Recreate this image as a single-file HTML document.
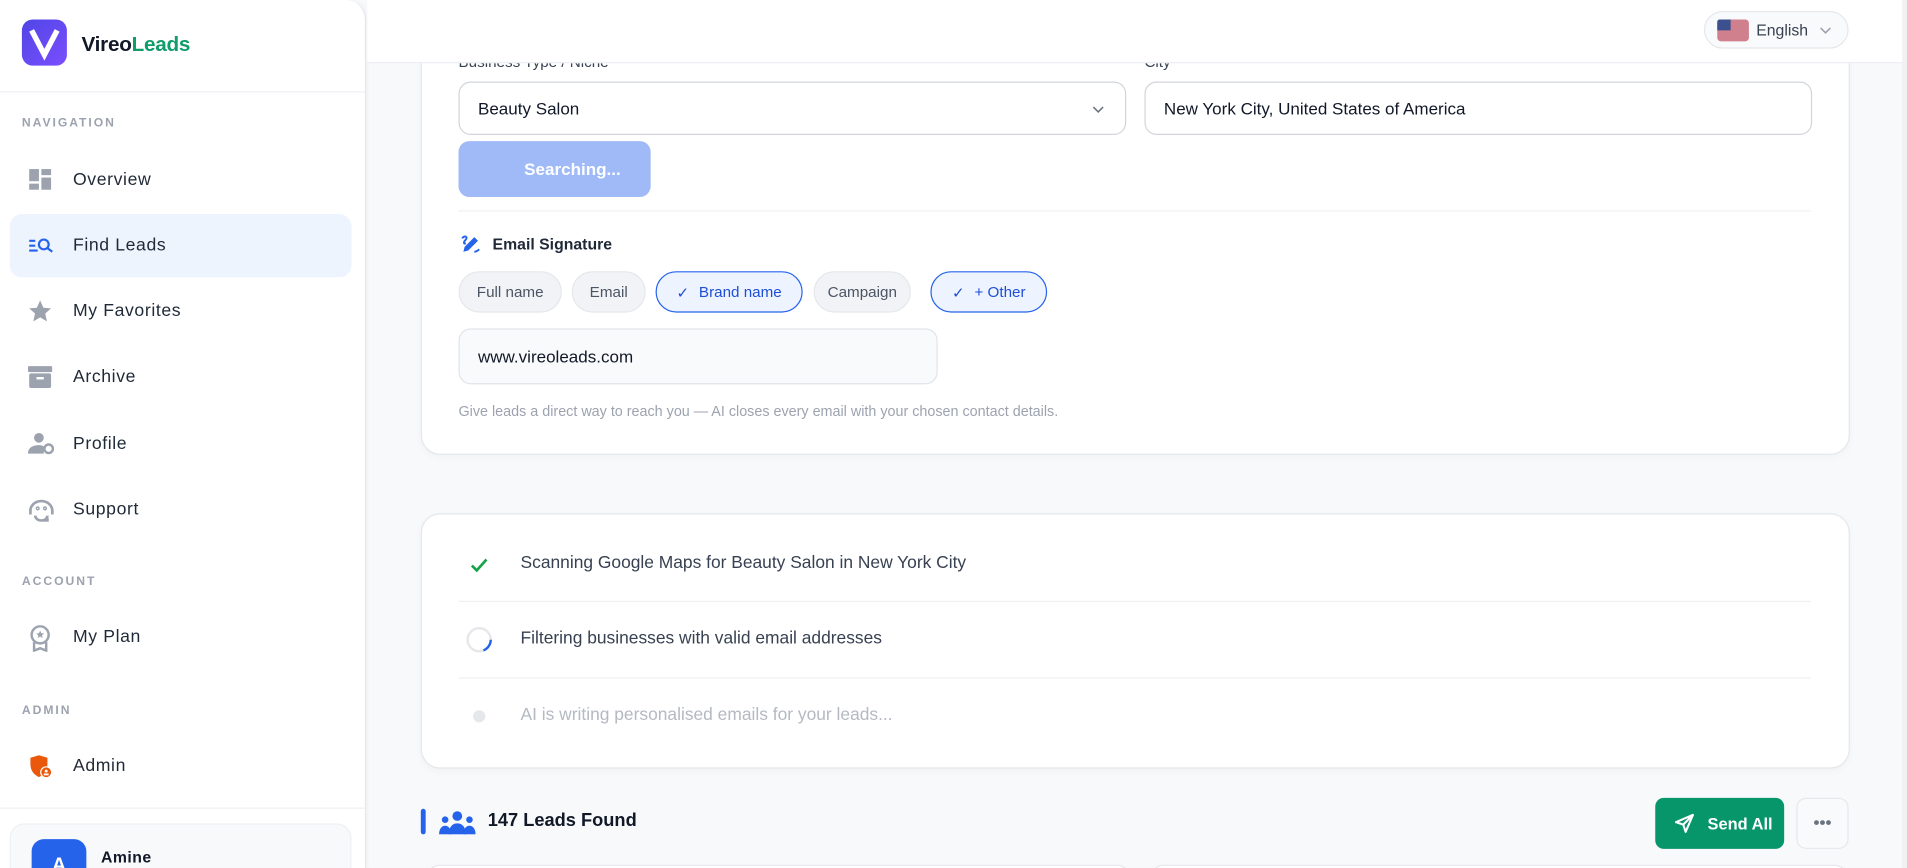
<!DOCTYPE html>
<html><head><meta charset="utf-8"><style>
*{box-sizing:border-box;margin:0;padding:0}
html,body{width:1907px;height:868px;overflow:hidden;background:#f8f9fb}
#w{position:absolute;left:0;top:0;width:1568px;height:714px;overflow:hidden;transform:scale(1.21620);transform-origin:0 0;background:#f8f9fb;font-family:"Liberation Sans",sans-serif;color:#111827}
.abs{position:absolute}
.sb{left:0;top:0;width:301px;height:714px;background:#fff;border-right:1px solid #e5e7eb;border-top-right-radius:16px;box-shadow:1px 0 3px rgba(0,0,0,.04)}
.lbl{position:absolute;left:18px;font-size:10px;font-weight:bold;letter-spacing:1.6px;color:#9ca3af}
.nav{position:absolute;left:8px;width:281px;height:52px;border-radius:10px;display:flex;align-items:center;padding-left:52px;font-size:14.5px;color:#1f2937;letter-spacing:.5px}
.nav svg{position:absolute;left:15px;top:16px}
.hdr{left:302px;top:0;width:1262px;height:52px;background:#fff;border-bottom:1px solid #eceef2;z-index:5}
.card{background:#fff;border:1px solid #e5e7eb;border-radius:16px;box-shadow:0 2px 6px rgba(0,0,0,.03)}
.inp{position:absolute;height:44px;border:1px solid #d1d5db;border-radius:10px;font-size:14px;display:flex;align-items:center;padding-left:15px;color:#111827}
.chip{position:absolute;top:223px;height:34px;border-radius:17px;border:1px solid #e5e7eb;background:#f1f3f7;font-size:12.5px;color:#4b5563;display:flex;align-items:center;justify-content:center}
.chip.on{border:1px solid #2563eb;background:#eef4ff;color:#1d4ed8}
.row{position:absolute;left:428px;font-size:14.3px;color:#374151}
.sep{position:absolute;left:377px;width:1112px;height:1px;background:#eef0f3}
</style></head><body><div id="w">
<div class="abs sb">
  <div class="abs" style="left:18px;top:16px;width:37px;height:38px;border-radius:9px;background:linear-gradient(135deg,#4f46e5,#7c4dff)">
    <svg width="37" height="38" viewBox="0 0 37 38"><path d="M8 9 L18.5 29 L29 9" fill="none" stroke="#fff" stroke-width="4.5" stroke-linejoin="miter"/></svg>
  </div>
  <div class="abs" style="left:67px;top:27px;font-size:17px;font-weight:bold;letter-spacing:-.2px"><span style="color:#111827">Vireo</span><span style="color:#0f9d6b">Leads</span></div>
  <div class="abs" style="left:0;top:75px;width:300px;height:1px;background:#eef0f3"></div>
  <div class="lbl" style="top:96px">NAVIGATION</div>
  <div class="nav" style="top:122px"><svg width="20" height="20" viewBox="0 0 20 20" fill="#9ca3af"><rect x="1" y="1" width="8" height="10"/><rect x="11" y="1" width="8" height="5"/><rect x="1" y="13" width="8" height="5"/><rect x="11" y="8" width="8" height="10"/></svg>Overview</div>
  <div class="nav" style="top:176px;background:#eef4fe"><svg width="22" height="20" viewBox="0 0 22 20" fill="none" stroke="#2563eb" stroke-width="1.8"><path d="M1 6h5M1 10h5M1 14h7"/><circle cx="13" cy="9" r="4"/><path d="M16 12l4 3"/></svg>Find Leads</div>
  <div class="nav" style="top:230px"><svg width="20" height="20" viewBox="0 0 20 20"><path d="M10 1l2.7 6 6.3.6-4.8 4.2 1.4 6.4L10 15l-5.6 3.2 1.4-6.4L1 7.6l6.3-.6z" fill="#9ca3af"/></svg>My Favorites</div>
  <div class="nav" style="top:284px"><svg width="20" height="20" viewBox="0 0 20 20" fill="#9ca3af"><rect x="0" y="1" width="20" height="5" rx="1"/><rect x="1" y="7" width="18" height="12" rx="1.5"/><rect x="7" y="10" width="6" height="2" fill="#fff"/></svg>Archive</div>
  <div class="nav" style="top:339px"><svg width="22" height="20" viewBox="0 0 22 20" fill="#9ca3af"><circle cx="9" cy="5" r="4"/><path d="M0 18c0-5 4-7 9-7 2 0 3 .5 4 1v6z"/><circle cx="17" cy="14" r="3.5" fill="none" stroke="#9ca3af" stroke-width="2"/></svg>Profile</div>
  <div class="nav" style="top:393px"><svg width="22" height="20" viewBox="0 0 22 20" fill="none" stroke="#9ca3af" stroke-width="2.2"><path d="M2 14v-3a9 8 0 0118 0v3"/><path d="M6 15a5 4 0 0010 0"/><circle cx="8" cy="9" r=".6"/><circle cx="14" cy="9" r=".6"/><path d="M16 17v2h-4"/></svg>Support</div>
  <div class="lbl" style="top:473px">ACCOUNT</div>
  <div class="nav" style="top:498px"><svg width="20" height="22" viewBox="0 0 20 22" fill="none" stroke="#9ca3af" stroke-width="2"><circle cx="10" cy="8" r="7"/><path d="M10 4.5l1 2.2 2.3.2-1.8 1.5.6 2.3-2.1-1.3-2.1 1.3.6-2.3-1.8-1.5 2.3-.2z" fill="#9ca3af" stroke="none"/><path d="M5 14v7l5-2 5 2v-7"/></svg>My Plan</div>
  <div class="lbl" style="top:579px">ADMIN</div>
  <div class="nav" style="top:604px"><svg width="22" height="22" viewBox="0 0 22 22"><path d="M2 3l7-2 7 2v5c0 6-3 9-7 11-4-2-7-5-7-11z" fill="#ea580c"/><circle cx="15" cy="15" r="5" fill="#fff"/><circle cx="15" cy="15" r="4" fill="#ea580c"/><circle cx="15" cy="14" r="1.2" fill="#fff"/><rect x="13" y="16" width="4" height="1.5" fill="#fff"/></svg>Admin</div>
  <div class="abs" style="left:0;top:664px;width:300px;height:1px;background:#eef0f3"></div>
  <div class="abs" style="left:8px;top:677px;width:281px;height:50px;border-radius:12px;background:#f8f9fb;border:1px solid #eef0f3"></div>
  <div class="abs" style="left:26px;top:690px;width:45px;height:40px;border-radius:10px;background:#2563eb;color:#fff;font-weight:bold;text-align:center;line-height:44px">A</div>
  <div class="abs" style="left:83px;top:697px;font-size:13px;font-weight:bold;letter-spacing:.4px">Amine</div>
</div>

<div class="abs hdr">
  <div class="abs" style="left:1099px;top:9px;width:119px;height:31px;border:1px solid #e5e7eb;border-radius:16px;background:#f9fafb;display:flex;align-items:center;padding-left:10px;font-size:13px;color:#374151">
    <span style="display:inline-block;width:26px;height:18px;border-radius:3px;background:#d07f8c;position:relative;margin-right:6px"><span style="position:absolute;left:0;top:0;width:11px;height:9px;background:#3c4f8e;border-radius:2px 0 0 0"></span></span>English
    <svg style="margin-left:9px" width="10" height="6" viewBox="0 0 10 6"><path d="M1 1l4 4 4-4" fill="none" stroke="#9ca3af" stroke-width="1.3"/></svg>
  </div>
</div>
<div class="abs" style="left:1564px;top:0;width:4px;height:714px;background:#f1f1f1"></div>

<div class="abs card" style="left:346px;top:-20px;width:1175px;height:394px"></div>
<div class="abs" style="left:377px;top:44px;font-size:12.5px;color:#374151">Business Type / Niche</div>
<div class="abs" style="left:941px;top:44px;font-size:12.5px;color:#374151">City</div>
<div class="inp" style="left:377px;top:67px;width:549px">Beauty Salon<svg style="position:absolute;right:17px;top:19px" width="10" height="6" viewBox="0 0 10 6"><path d="M1 1l4 4 4-4" fill="none" stroke="#6b7280" stroke-width="1.3"/></svg></div>
<div class="inp" style="left:941px;top:67px;width:549px">New York City, United States of America</div>
<div class="abs" style="left:377px;top:116px;width:158px;height:46px;border-radius:9px;background:#9fbaf6;color:#fff;font-weight:bold;font-size:14px;line-height:46px;padding-left:54px">Searching...</div>
<div class="sep" style="top:173px"></div>
<svg class="abs" style="left:378px;top:192px" width="18" height="18" viewBox="0 0 18 18"><path d="M3 15l1-4 8-8 3 3-8 8z" fill="#2563eb"/><path d="M2 4c2-3 5-1 3 1s-2 4 0 3" fill="none" stroke="#2563eb" stroke-width="1.6"/><path d="M12 15c2 0 3-1 4-2" fill="none" stroke="#2563eb" stroke-width="1.6"/></svg>
<div class="abs" style="left:405px;top:193px;font-size:13px;font-weight:bold;color:#1f2937">Email Signature</div>
<div class="chip" style="left:377px;width:85px">Full name</div>
<div class="chip" style="left:470px;width:61px">Email</div>
<div class="chip on" style="left:539px;width:121px"><span style="margin-right:8px">✓</span>Brand name</div>
<div class="chip" style="left:669px;width:80px">Campaign</div>
<div class="chip on" style="left:765px;width:96px"><span style="margin-right:8px">✓</span>+ Other</div>
<div class="inp" style="left:377px;top:270px;width:394px;height:46px;background:#f9fafb;border-color:#e1e4ea">www.vireoleads.com</div>
<div class="abs" style="left:377px;top:331px;font-size:11.8px;color:#9ca3af">Give leads a direct way to reach you — AI closes every email with your chosen contact details.</div>

<div class="abs card" style="left:346px;top:422px;width:1175px;height:210px"></div>
<svg class="abs" style="left:386px;top:458px" width="16" height="14" viewBox="0 0 16 14"><path d="M2 7l4 4 8-9" fill="none" stroke="#16a34a" stroke-width="2.2"/></svg>
<div class="row" style="top:455px">Scanning Google Maps for Beauty Salon in New York City</div>
<div class="sep" style="top:494px"></div>
<svg class="abs" style="left:382px;top:514px" width="24" height="24" viewBox="0 0 24 24"><circle cx="12" cy="12" r="9.5" fill="none" stroke="#e5e7eb" stroke-width="2"/><path d="M21.5 12a9.5 9.5 0 01-6 8.8" fill="none" stroke="#2563eb" stroke-width="2"/></svg>
<div class="row" style="top:517px">Filtering businesses with valid email addresses</div>
<div class="sep" style="top:557px"></div>
<div class="abs" style="left:389px;top:584px;width:10px;height:10px;border-radius:50%;background:#e5e7eb"></div>
<div class="row" style="top:580px;color:#b4b9c2">AI is writing personalised emails for your leads...</div>

<div class="abs" style="left:346px;top:665px;width:4px;height:21px;border-radius:2px;background:#2563eb"></div>
<svg class="abs" style="left:361px;top:666px" width="30" height="20" viewBox="0 0 30 20" fill="#2563eb"><circle cx="15" cy="5" r="4"/><path d="M8 20c0-6 3-9 7-9s7 3 7 9z"/><circle cx="5" cy="8" r="2.7"/><path d="M0 20c0-4 2-7 5-7s5 3 5 7z"/><circle cx="25" cy="8" r="2.7"/><path d="M20 20c0-4 2-7 5-7s5 3 5 7z"/></svg>
<div class="abs" style="left:401px;top:666px;font-size:15px;font-weight:bold;color:#111827">147 Leads Found</div>
<div class="abs" style="left:1361px;top:656px;width:106px;height:42px;border-radius:7px;background:#07966a;color:#fff;font-size:13.5px;font-weight:bold;display:flex;align-items:center;padding-left:15px">
<svg width="18" height="18" viewBox="0 0 18 18" style="margin-right:10px"><path d="M16 2L2 8l6 2 2 6z M16 2L8 10" fill="none" stroke="#fff" stroke-width="1.7" stroke-linejoin="round"/></svg>Send All</div>
<div class="abs" style="left:1477px;top:656px;width:43px;height:42px;border-radius:8px;border:1px solid #e5e7eb;background:#f9fafb;text-align:center;line-height:38px;font-size:14px;color:#6b7280;font-weight:bold">•••</div>
<div class="abs card" style="left:350px;top:711px;width:580px;height:40px;border-radius:12px"></div>
<div class="abs card" style="left:945px;top:711px;width:575px;height:40px;border-radius:12px"></div>
</div></body></html>
